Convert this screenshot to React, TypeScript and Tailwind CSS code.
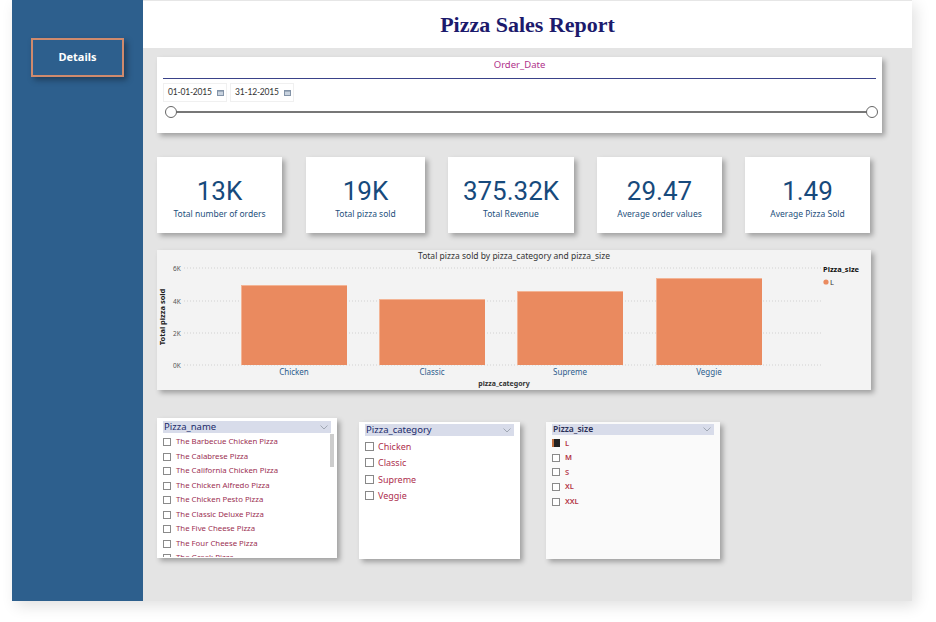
import React from 'react'

const kpis = [
  { value: '13K', label: 'Total number of orders', cls: 'w-[125px]' },
  { value: '19K', label: 'Total pizza sold', cls: 'w-[119px] ml-[24px]' },
  { value: '375.32K', label: 'Total Revenue', cls: 'w-[126px] ml-[23px]' },
  { value: '29.47', label: 'Average order values', cls: 'w-[125px] ml-[23px]' },
  { value: '1.49', label: 'Average Pizza Sold', cls: 'w-[125px] ml-[23px]' },
]

const pizzaNames = [
  'The Barbecue Chicken Pizza',
  'The Calabrese Pizza',
  'The California Chicken Pizza',
  'The Chicken Alfredo Pizza',
  'The Chicken Pesto Pizza',
  'The Classic Deluxe Pizza',
  'The Five Cheese Pizza',
  'The Four Cheese Pizza',
  'The Greek Pizza',
]

const categories = ['Chicken', 'Classic', 'Supreme', 'Veggie']
const sizes = ['L', 'M', 'S', 'XL', 'XXL']

const bars = [
  { name: 'Chicken', x: 84, top: 35 },
  { name: 'Classic', x: 222, top: 49 },
  { name: 'Supreme', x: 360, top: 41 },
  { name: 'Veggie', x: 499, top: 28 },
]

const ui = { fontFamily: '"Noto Sans", "Open Sans", sans-serif' }

function CalendarIcon() {
  return (
    <svg width="7" height="6" viewBox="0 0 7 6">
      <rect x="0.5" y="0.5" width="6" height="5" fill="#c9d3df" stroke="#8494a8" strokeWidth="1" />
      <rect x="0" y="0" width="7" height="1.6" fill="#8494a8" />
    </svg>
  )
}

function Chevron() {
  return (
    <svg width="8" height="5" viewBox="0 0 8 5">
      <path d="M0.5 0.5 L4 4 L7.5 0.5" fill="none" stroke="#9aa0ad" strokeWidth="0.9" />
    </svg>
  )
}

function DateBox({ value }: { value: string }) {
  return (
    <div className="flex h-[19px] w-[64px] items-center border border-[#f0f0f0] pl-[4px] pr-[2px]">
      <span
        className="whitespace-nowrap text-[8.5px] leading-none tracking-[-0.2px] text-[#333]"
        style={{ fontFamily: 'Lato, "Noto Sans", sans-serif' }}
      >
        {value}
      </span>
      <span className="ml-auto flex"><CalendarIcon /></span>
    </div>
  )
}

function BarChart() {
  const grid = [18, 51, 83, 115]
  const labels = ['6K', '4K', '2K', '0K']
  return (
    <svg width="714" height="140" viewBox="0 0 714 140" style={ui}>
      <text x="357" y="9" textAnchor="middle" fontSize="8.5" fill="#333">
        Total pizza sold by pizza_category and pizza_size
      </text>
      {grid.map((y, i) => (
        <g key={y}>
          <line x1="27" x2="664" y1={y} y2={y} stroke="#c8c8c8" strokeWidth="0.8" strokeDasharray="1 2" />
          <text x="16" y={y + 2.5} fontSize="6.5" fill="#555">{labels[i]}</text>
        </g>
      ))}
      {bars.map((b) => (
        <g key={b.name}>
          <rect x={b.x} y={b.top} width="106" height={115 - b.top} fill="#ea8a5f" />
          <line x1={b.x} x2={b.x + 106} y1={b.top + 0.5} y2={b.top + 0.5} stroke="#f3b495" strokeWidth="1" />
          <line x1={b.x + 0.5} x2={b.x + 0.5} y1={b.top} y2={115} stroke="#f3b495" strokeWidth="1" />
          <text x={b.x + 53} y="125" textAnchor="middle" fontSize="8" fill="#2c5c8c">{b.name}</text>
        </g>
      ))}
      <text x="347" y="136" textAnchor="middle" fontSize="7" fontWeight="bold" fill="#333">pizza_category</text>
      <text
        x="6"
        y="67"
        textAnchor="middle"
        fontSize="7.5"
        fontWeight="bold"
        fill="#222"
        transform="rotate(-90 6 67)"
        dominantBaseline="middle"
      >
        Total pizza sold
      </text>
      <text x="666" y="22" fontSize="7.5" fontWeight="bold" fill="#111">Pizza_size</text>
      <circle cx="669" cy="32" r="2.6" fill="#ea8a5f" />
      <text x="673" y="34.5" fontSize="7.5" fill="#333">L</text>
    </svg>
  )
}

export default function App() {
  return (
    <div className="h-[622px] w-[936px] overflow-hidden bg-white" style={ui}>
      <div className="ml-[12px] flex h-[601px] w-[900px] shadow-[4px_5px_14px_rgba(0,0,0,0.12)]">
        <aside className="w-[131px] shrink-0 bg-[#2d5f8d] pt-[38px] pl-[19px]">
          <div className="flex h-[39px] w-[93px] items-center justify-center border-2 border-[#cf8a6d] bg-[#2d5f8d] shadow-[3px_3px_6px_rgba(0,0,0,0.35)]">
            <span className="text-[11px] font-bold text-white">Details</span>
          </div>
        </aside>

        <main className="flex flex-1 flex-col">
          <header className="flex h-[48px] items-center justify-center border-t border-[#e6e6e6] bg-white">
            <h1
              className="text-[22px] font-bold text-[#1c1a6c]"
              style={{ fontFamily: '"Liberation Serif", "DejaVu Serif", serif' }}
            >
              Pizza Sales Report
            </h1>
          </header>

          <section className="flex flex-1 flex-col bg-[#e4e4e4] pl-[14px]">
            {/* date slicer */}
            <div className="mt-[9px] h-[76px] w-[725px] bg-white px-[6px] pt-[1px] shadow-[3px_3px_5px_rgba(0,0,0,0.3)]">
              <div className="flex h-[14px] items-center justify-center text-[9.5px] text-[#b0318a]">Order_Date</div>
              <div className="mt-[6px] border-t border-[#3a4289]" />
              <div className="mt-[4px] flex gap-[3px]">
                <DateBox value="01-01-2015" />
                <DateBox value="31-12-2015" />
              </div>
              <div className="relative mt-[3px] ml-[2px] mr-[-2px] h-[14px]">
                <div className="absolute left-[6px] right-[6px] top-[6px] h-[2px] bg-[#777]" />
                <div className="absolute left-0 top-[1px] h-[12px] w-[12px] rounded-full border border-[#666] bg-white" />
                <div className="absolute right-0 top-[1px] h-[12px] w-[12px] rounded-full border border-[#666] bg-white" />
              </div>
            </div>

            {/* kpi cards */}
            <div className="mt-[24px] flex">
              {kpis.map((k) => (
                <div
                  key={k.label}
                  className={`${k.cls} flex h-[76px] flex-col items-center bg-white pt-[19px] shadow-[3px_3px_5px_rgba(0,0,0,0.3)]`}
                >
                  <span
                    className="text-[26px] leading-[30px] text-[#174a7c]"
                    style={{ fontFamily: 'Roboto, "Noto Sans", sans-serif' }}
                  >
                    {k.value}
                  </span>
                  <span className="mt-[2px] text-[8.5px] leading-[11px] text-[#24507c]">{k.label}</span>
                </div>
              ))}
            </div>

            {/* chart */}
            <div className="mt-[17px] h-[140px] w-[714px] bg-[#f3f3f3] shadow-[3px_3px_5px_rgba(0,0,0,0.3)]">
              <BarChart />
            </div>

            {/* slicers */}
            <div className="mt-[28px] flex items-start">
              <div className="relative h-[140px] w-[180px] overflow-hidden bg-white px-[6px] pt-[3px] shadow-[3px_3px_5px_rgba(0,0,0,0.3)]">
                <div className="flex h-[12px] items-center justify-between bg-[#d8dcea] pl-[1px] pr-[3px]">
                  <span className="text-[9.5px] leading-none text-[#1b2a6b]">Pizza_name</span>
                  <Chevron />
                </div>
                <div className="mt-[2px] flex h-[122px] flex-col overflow-hidden">
                  {pizzaNames.map((n) => (
                    <div key={n} className="flex h-[14.5px] shrink-0 items-center">
                      <span className="h-[8px] w-[8px] border border-[#8a8a8a] bg-white" />
                      <span className="ml-[5px] text-[7.8px] leading-none text-[#9c2f52]">{n}</span>
                    </div>
                  ))}
                </div>
                <div className="absolute right-[3px] top-[16px] h-[33px] w-[4px] bg-[#cdcdcd]" />
              </div>

              <div className="ml-[22px] mt-[4px] h-[137px] w-[161px] bg-white px-[6px] pt-[2px] shadow-[3px_3px_5px_rgba(0,0,0,0.3)]">
                <div className="flex h-[12px] items-center justify-between bg-[#d8dcea] pl-[1px] pr-[3px]">
                  <span className="text-[9.5px] leading-none text-[#1b2a6b]">Pizza_category</span>
                  <Chevron />
                </div>
                <div className="mt-[2px] flex flex-col">
                  {categories.map((c) => (
                    <div key={c} className="flex h-[16.5px] items-center">
                      <span className="h-[9px] w-[9px] border border-[#888] bg-white" />
                      <span className="ml-[4px] text-[9px] leading-none text-[#ae2f4e]">{c}</span>
                    </div>
                  ))}
                </div>
              </div>

              <div className="ml-[26px] mt-[4px] h-[137px] w-[174px] bg-[#fafafa] px-[6px] pt-[2px] shadow-[3px_3px_5px_rgba(0,0,0,0.3)]">
                <div className="flex h-[11px] items-center justify-between bg-[#d8dcea] pl-[1px] pr-[3px]">
                  <span className="text-[8.5px] font-semibold leading-none text-[#2a2f55]">Pizza_size</span>
                  <Chevron />
                </div>
                <div className="mt-[1px] flex flex-col">
                  {sizes.map((s, i) => (
                    <div key={s} className="flex h-[14.6px] items-center">
                      <span
                        className={
                          i === 0
                            ? 'h-[8px] w-[8px] border-l-2 border-[#c07040] bg-[#222]'
                            : 'h-[8px] w-[8px] border border-[#8a8a8a] bg-white'
                        }
                      />
                      <span className="ml-[5px] text-[7.5px] font-semibold leading-none text-[#b23244]">{s}</span>
                    </div>
                  ))}
                </div>
              </div>
            </div>
          </section>
        </main>
      </div>
    </div>
  )
}
